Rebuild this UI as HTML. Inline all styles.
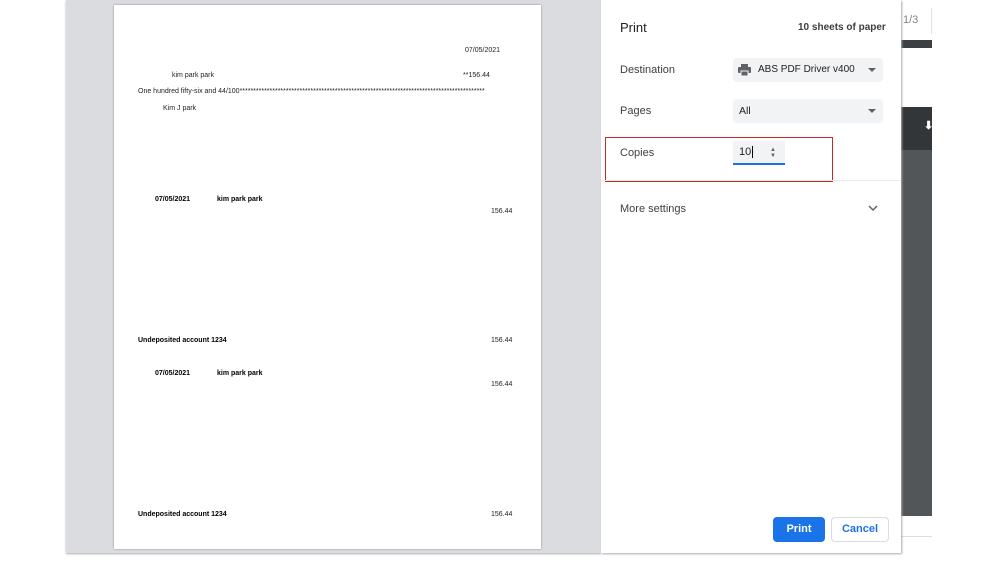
<!DOCTYPE html><html><head><style>
body{margin:0;width:999px;height:562px;background:#fff;position:relative;overflow:hidden;font-family:"Liberation Sans",Arial,sans-serif}
.a{position:absolute}
.doc{font-size:7px;color:#222;position:absolute;white-space:nowrap}
.b{font-weight:bold;color:#000}
.lbl{position:absolute;left:620px;font-size:11px;color:#3c4043}
.sel{position:absolute;left:733px;width:150px;height:24px;background:#f1f3f4;border-radius:4px;font-size:10.5px;color:#202124}
</style></head><body>
<div class="a" style="left:901px;top:0;width:31px;height:553px;background:#fff"></div>
<div class="a" style="left:903px;top:14px;font-size:11px;color:#80868b">1/3</div>
<div class="a" style="left:931px;top:8px;width:1px;height:26px;background:#e0e0e0"></div>
<div class="a" style="left:901px;top:40px;width:31px;height:8px;background:#3c4043"></div>
<div class="a" style="left:901px;top:107px;width:31px;height:409px;background:#525659"></div>
<div class="a" style="left:901px;top:107px;width:31px;height:43px;background:#323639"></div>
<div class="a" style="left:924px;top:119px;color:#fff;font-size:11px;font-weight:bold">⬇</div>
<div class="a" style="left:901px;top:536px;width:31px;height:1px;background:#ddd"></div>
<div class="a" style="left:66px;top:0;width:535px;height:553px;background:#dadce0;box-shadow:0 1px 2px #aaa"></div>
<div class="a" style="left:114px;top:5px;width:427px;height:544px;background:#fff;box-shadow:0 0 2px #888"></div>
<div class="doc" style="left:465px;top:47px">07/05/2021</div>
<div class="doc" style="left:172px;top:72px">kim park park</div>
<div class="doc" style="left:463px;top:72px">**156.44</div>
<div class="doc" style="left:138px;top:88px">One hundred fifty-six and 44/100******************************************************************************************</div>
<div class="doc" style="left:163px;top:105px">Kim J park</div>
<div class="doc b" style="left:155px;top:196px">07/05/2021</div>
<div class="doc b" style="left:217px;top:196px">kim park park</div>
<div class="doc" style="left:491px;top:208px">156.44</div>
<div class="doc b" style="left:138px;top:337px">Undeposited account 1234</div>
<div class="doc" style="left:491px;top:337px">156.44</div>
<div class="doc b" style="left:155px;top:370px">07/05/2021</div>
<div class="doc b" style="left:217px;top:370px">kim park park</div>
<div class="doc" style="left:491px;top:381px">156.44</div>
<div class="doc b" style="left:138px;top:511px">Undeposited account 1234</div>
<div class="doc" style="left:491px;top:511px">156.44</div>
<div class="a" style="left:601px;top:0;width:300px;height:553px;background:#fff;box-shadow:1px 1px 2px #aaa"></div>
<div class="a" style="left:620px;top:20px;font-size:13px;color:#202124">Print</div>
<div class="a" style="left:798px;top:22px;font-size:10px;font-weight:bold;color:#3c4043">10 sheets of paper</div>
<div class="lbl" style="top:64px">Destination</div>
<div class="sel" style="top:58px"><svg class="a" style="left:5px;top:6px" width="13" height="12" viewBox="0 0 13 12"><rect x="3" y="0" width="7" height="3" fill="#5f6368"/><rect x="0" y="3" width="13" height="6" rx="1" fill="#5f6368"/><rect x="3" y="7" width="7" height="5" fill="#5f6368" stroke="#f1f3f4"/></svg><span class="a" style="left:25px;top:6px;font-size:10px">ABS PDF Driver v400</span><span class="a" style="left:135px;top:10px;border:4px solid transparent;border-top:4px solid #5f6368"></span></div>
<div class="lbl" style="top:105px">Pages</div>
<div class="sel" style="top:99px"><span class="a" style="left:6px;top:6px">All</span><span class="a" style="left:135px;top:10px;border:4px solid transparent;border-top:4px solid #5f6368"></span></div>
<div class="a" style="left:605px;top:137px;width:226px;height:43px;border:1px solid #c62828"></div>
<div class="lbl" style="top:147px">Copies</div>
<div class="a" style="left:733px;top:141px;width:52px;height:22px;background:#f1f3f4;border-bottom:2px solid #1a73e8;font-size:11px;color:#202124"><span class="a" style="left:6px;top:5px">10</span><span class="a" style="left:19px;top:5px;width:1px;height:12px;background:#000"></span><span class="a" style="left:37px;top:6px;font-size:6px;line-height:6px;color:#5f6368">▲<br>▼</span></div>
<div class="a" style="left:601px;top:180px;width:300px;height:1px;background:#e8eaed"></div>
<div class="lbl" style="top:203px">More settings</div>
<svg class="a" style="left:868px;top:205px" width="10" height="7" viewBox="0 0 10 7"><path d="M1 1l4 4 4-4" fill="none" stroke="#5f6368" stroke-width="1.5"/></svg>
<div class="a" style="left:773px;top:517px;width:52px;height:25px;background:#1a73e8;border-radius:4px;color:#fff;font-size:11px;font-weight:bold;text-align:center;line-height:25px">Print</div>
<div class="a" style="left:831px;top:517px;width:56px;height:23px;border:1px solid #dadce0;border-radius:4px;color:#1a73e8;font-size:11px;font-weight:bold;text-align:center;line-height:23px">Cancel</div>
</body></html>
